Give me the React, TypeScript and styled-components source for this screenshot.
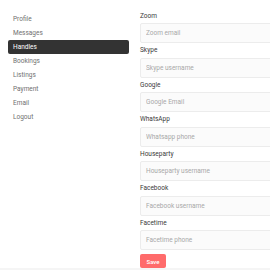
import React from "react";
import styled, { createGlobalStyle } from "styled-components";

const links = ["Profile", "Messages", "Handles", "Bookings", "Listings", "Payment", "Email", "Logout"];

const fields = [
  { label: "Zoom", placeholder: "Zoom email" },
  { label: "Skype", placeholder: "Skype username" },
  { label: "Google", placeholder: "Google Email" },
  { label: "WhatsApp", placeholder: "Whatsapp phone" },
  { label: "Houseparty", placeholder: "Houseparty username" },
  { label: "Facebook", placeholder: "Facebook username" },
  { label: "Facetime", placeholder: "Facetime phone" },
];

const App = () => {
  return (
    <>
      <Global />
      <Page>
        <Container>
          <Sidebar>
            {links.map((l) => (
              <NavItem key={l} active={l === "Handles"}>
                {l}
              </NavItem>
            ))}
          </Sidebar>
          <Main>
            {fields.map((f) => (
              <Field key={f.label}>
                <Label>{f.label}</Label>
                <Input placeholder={f.placeholder} />
              </Field>
            ))}
            <Save>Save</Save>
          </Main>
        </Container>
        <Footer />
      </Page>
    </>
  );
};

export default App;

const Global = createGlobalStyle`
  html, body {
    margin: 0;
    padding: 0;
    overflow: hidden;
    background: #ffffff;
    font-family: Roboto, "Liberation Sans", sans-serif;
  }
`;

const Page = styled.div`
  width: 270px;
  height: 270px;
  overflow: hidden;
  display: flex;
  flex-direction: column;
`;

const Container = styled.div`
  display: flex;
  gap: 11px;
  height: 268px;
  flex-shrink: 0;
`;

const Sidebar = styled.div`
  width: 121px;
  flex-shrink: 0;
  margin-left: 8px;
  padding-top: 12px;
  display: flex;
  flex-direction: column;
`;

const NavItem = styled.div<{ active?: boolean }>`
  height: 14px;
  line-height: 14px;
  padding-left: 5px;
  font-size: 6.5px;
  color: ${(p) => (p.active ? "#ffffff" : "#707070")};
  background-color: ${(p) => (p.active ? "#333333" : "transparent")};
  border-radius: 2px;
`;

const Main = styled.div`
  width: 200px;
  flex-shrink: 0;
  padding-top: 11.5px;
  display: flex;
  flex-direction: column;
`;

const Field = styled.div`
  display: flex;
  flex-direction: column;
  margin-bottom: 3px;
`;

const Label = styled.div`
  height: 9px;
  line-height: 9px;
  font-size: 6.5px;
  color: #3a3a3a;
  margin-bottom: 2.5px;
`;

const Input = styled.input`
  box-sizing: border-box;
  height: 20px;
  width: 100%;
  border: 1px solid #ececec;
  border-radius: 2px;
  padding: 0 5px;
  font-family: Roboto, "Liberation Sans", sans-serif;
  font-size: 6.5px;
  outline: none;
  background-color: #fbfbfb;
  background-image: radial-gradient(#e4e4e4 0.6px, transparent 0.7px);
  background-size: 4px 4px;

  &::placeholder {
    color: #a8a8a8;
  }
`;

const Save = styled.button`
  margin-top: 1px;
  width: 26px;
  height: 15px;
  border: none;
  border-radius: 2px;
  background-color: #ff6b6b;
  color: #ffffff;
  font-family: Roboto, "Liberation Sans", sans-serif;
  font-size: 6px;
  font-weight: 500;
  padding: 0;
`;

const Footer = styled.div`
  height: 2px;
  background-color: #f5f5f5;
`;
